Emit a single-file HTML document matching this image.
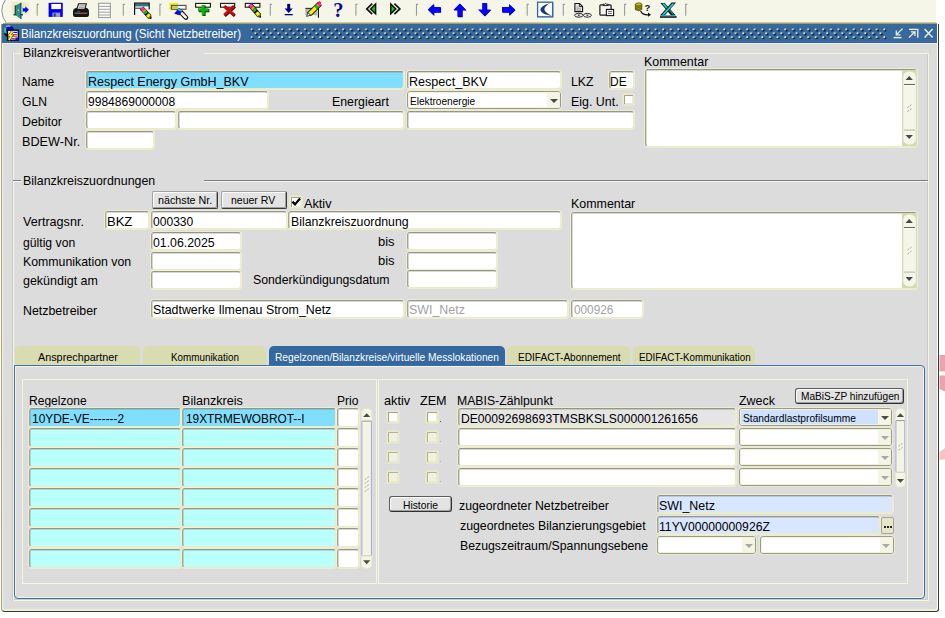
<!DOCTYPE html><html><head><meta charset="utf-8"><title>Bilanzkreiszuordnung</title><style>
*{box-sizing:border-box;margin:0;padding:0}
html,body{width:945px;height:618px;overflow:hidden;background:#fff}
body{font-family:"Liberation Sans",sans-serif;font-size:13.6px;color:#000;position:relative}
.a{position:absolute}
.t{position:absolute;white-space:pre;line-height:14px;height:14px;transform-origin:0 0}
.f{position:absolute;background:#fff;border:1px solid;border-color:#95977e #ebebc8 #ebebc8 #a4a688;border-radius:3px;box-shadow:0 0 0 1px rgba(241,241,212,0.8)}
.f>i{display:block;position:absolute;left:0;top:0;right:0;bottom:0;border-top:1px solid rgba(120,120,130,0.28);border-left:1px solid rgba(120,120,135,0.3);border-radius:2px 0 0 0}
.dd{position:absolute;background:#fff;border:1px solid #9c9c82;border-radius:3px;overflow:hidden;box-shadow:0 0 0 1px rgba(240,240,214,0.7)}
.dd>i{display:block;position:absolute;left:0;top:0;right:0;bottom:0;border:1px solid #f1f1dc;border-radius:2px}
.dd>b{display:block;position:absolute;right:0;top:0;bottom:0;width:13px;background:#f5f5e6}
.dd>s{display:block;position:absolute;right:2.4px;top:7.2px;width:0;height:0;border-left:4px solid transparent;border-right:4px solid transparent;border-top:4.4px solid #4a4a4a}
.dd.dis>s{border-top-color:#a8a8a8}
.cy{background:#80dfff}
.cy2{background:#b9fffb}
.lb{background:#d8e7ff}
.btn{position:absolute;background:#e3e3e3;border:1px solid;border-color:#a2a2a2 #383838 #383838 #a2a2a2;border-radius:2px;box-shadow:inset -1px -1px 0 #a0a0a0,inset 1px 1px 0 #fdfdfd}
.cb{position:absolute;width:11px;height:11px;background:#fff;border:1px solid #e9e9c6;border-radius:1.5px;box-shadow:inset 1px 1px 0 #a4a484,inset -1px -1px 0 #ecebd0,0 0 0 1px rgba(238,238,205,0.45)}
.cbd{position:absolute;width:11px;height:11px;background:#f1f1e2;border:1px solid #e9e9c6;border-radius:1.5px;box-shadow:inset 1px 1px 0 #b4b492,inset -1px -1px 0 #e8e8cc,0 0 0 1px rgba(238,238,205,0.45)}
.tab{position:absolute;top:346px;height:20px;background:#d9dbb1;border-radius:5px 5px 0 0}
.tabA{background:#34689f}
.sb{position:absolute;background:#f4f4e4;border:1px solid #e4e4c8;border-radius:4px}
.up{position:absolute;width:0;height:0;border-left:4px solid transparent;border-right:4px solid transparent;border-bottom:4px solid #4d4d4d}
.dn{position:absolute;width:0;height:0;border-left:4px solid transparent;border-right:4px solid transparent;border-top:4px solid #4d4d4d}
</style></head><body>
<div class="a" style="left:8px;top:0px;width:928px;height:22px;background:#f5f5e8;"></div>
<svg class="a" style="left:0;top:0" width="12" height="24" viewBox="0 0 12 24"><path d="M5.6 -0.5 Q-2.6 11 6.6 23.5 H12 V-0.5 Z" fill="#f5f5e8"/><path d="M5.6 -0.5 Q-2.6 11 6.6 23.5" fill="none" stroke="#8e8e8e" stroke-width="1"/></svg>
<div class="a" style="left:5px;top:22px;width:931px;height:1px;background:#cfcba0;"></div>
<div class="a" style="left:3px;top:23px;width:934px;height:1px;background:#a39f6a;"></div>
<svg class="a" style="left:0;top:0" width="945" height="22" viewBox="0 0 945 22">
<path d="M38.8 4.4 H37.2 V15.8" stroke="#9b9b9b" stroke-width="1.1" fill="none"/>
<path d="M124.9 4.4 H123.3 V15.8" stroke="#9b9b9b" stroke-width="1.1" fill="none"/>
<path d="M161.5 4.4 H159.9 V15.8" stroke="#9b9b9b" stroke-width="1.1" fill="none"/>
<path d="M271.9 4.4 H270.3 V15.8" stroke="#9b9b9b" stroke-width="1.1" fill="none"/>
<path d="M357.5 4.4 H355.9 V15.8" stroke="#9b9b9b" stroke-width="1.1" fill="none"/>
<path d="M418.1 4.4 H416.5 V15.8" stroke="#9b9b9b" stroke-width="1.1" fill="none"/>
<path d="M528.8 4.4 H527.2 V15.8" stroke="#9b9b9b" stroke-width="1.1" fill="none"/>
<path d="M564.9 4.4 H563.3 V15.8" stroke="#9b9b9b" stroke-width="1.1" fill="none"/>
<path d="M626.2 4.4 H624.6 V15.8" stroke="#9b9b9b" stroke-width="1.1" fill="none"/>
<path d="M687.3 4.4 H685.7 V15.8" stroke="#9b9b9b" stroke-width="1.1" fill="none"/>
<rect x="11.4" y="2.2" width="17.4" height="12.4" fill="#efecc6"/>
<path d="M13.5 14.8 H23" stroke="#222" stroke-width="1.2"/>
<polygon points="15.2,5.4 20.6,2.9 20.6,18.8 15.2,14.9" fill="#2b8f8f"/>
<path d="M15.2 5.4 V14.9 M20.9 2.8 V18.9" stroke="#10302f" stroke-width="1.1"/>
<rect x="17.8" y="9.4" width="1.4" height="1.8" fill="#c8d84a"/>
<rect x="21.5" y="6.4" width="1.6" height="7.4" fill="#8ae6e8"/>
<polygon points="22.8,8.2 25.4,8.2 25.4,6.3 28.8,9.8 25.4,13.2 25.4,11.4 22.8,11.4" fill="#0808f0"/>
<rect x="48.6" y="2.9" width="14.2" height="14" fill="#0000fa"/>
<rect x="51.3" y="3.9" width="9.8" height="5.2" fill="#fff"/>
<path d="M51.5 3.2 H62" stroke="#111" stroke-width="0.9" stroke-dasharray="1.2 0.8"/>
<rect x="52.4" y="12.6" width="7.8" height="4.3" fill="#a0a0a0"/>
<rect x="53.8" y="13.4" width="1.8" height="3.2" fill="#2020e0"/>
<rect x="49" y="5.4" width="1.2" height="1.2" fill="#000060"/>
<path d="M73 12 Q73 8.4 77 7.8 L86 7.8 Q89 8.4 89 12 V14.4 Q89 17 86 17 H76 Q73 17 73 14.4 Z" fill="#161616"/>
<polygon points="78.6,3.8 86.4,3.8 84.8,9.2 76.8,9.2" fill="#e4e4e4" stroke="#161616" stroke-width="1.1"/>
<path d="M79.4 5.8 H85 M78.8 7.4 H84.4" stroke="#9a9a9a" stroke-width="0.9"/>
<path d="M74.6 13.2 H87.4" stroke="#909090" stroke-width="0.9"/>
<rect x="81" y="12.4" width="2.4" height="1.8" fill="#e01818"/>
<rect x="77" y="11.4" width="3" height="0.9" fill="#2a7a7a"/>
<rect x="98.6" y="3.3" width="11.8" height="14.2" fill="#fbfbf6" stroke="#9f9f9f" stroke-width="1.1"/>
<path d="M99 6.4 H110" stroke="#a9a9a9" stroke-width="1.1"/>
<path d="M99 9.3 H110" stroke="#a9a9a9" stroke-width="1.1"/>
<path d="M99 12.2 H110" stroke="#a9a9a9" stroke-width="1.1"/>
<path d="M99 15 H110" stroke="#a9a9a9" stroke-width="1.1"/>
<rect x="134.6" y="3.2" width="14.6" height="11.6" fill="#fff"/>
<rect x="135" y="3.8" width="14" height="2.6" fill="#2a7878"/>
<path d="M134.6 15 V3.2 H149.2 V9.5" stroke="#101010" stroke-width="1.2" fill="none"/>
<path d="M134.6 8.2 H142" stroke="#1a4a4a" stroke-width="1.1"/>
<path d="M141.6 8.0 L149.7 16.9" stroke="#101010" stroke-width="4.8" /><path d="M141.60 8.00 L143.48 10.08" stroke="#ff28c8" stroke-width="3.6"/><path d="M143.48 10.08 L144.98 11.74" stroke="#ff8a10" stroke-width="3.6"/><path d="M144.98 11.74 L146.49 13.41" stroke="#10c810" stroke-width="3.6"/><path d="M146.49 13.41 L147.43 14.45" stroke="#101010" stroke-width="3.6"/><path d="M147.43 14.45 L149.68 16.94" stroke="#f4f010" stroke-width="3.6"/><polygon points="148.3,18.2 151.0,15.7 151.0,18.4" fill="#f4f010" stroke="#101010" stroke-width="0.7"/><circle cx="150.6" cy="18.0" r="0.9" fill="#101010"/>
<rect x="169.4" y="3" width="8.8" height="7.2" fill="#f6f010"/>
<rect x="171.4" y="5.4" width="14.6" height="3.8" fill="#fafaf4" stroke="#4a4a4a" stroke-width="1.1"/>
<rect x="171.9" y="5.9" width="6.2" height="2.8" fill="#c8c860"/>
<path d="M180 11.6 L186 17.6" stroke="#101010" stroke-width="4.6" stroke-linecap="round"/>
<path d="M180.2 11.8 L185.8 17.4" stroke="#fff" stroke-width="2.6" stroke-linecap="round"/>
<polygon points="174.6,13.4 178.8,8.4 182.4,10.6 179.4,15" fill="#0a0ae0" stroke="#101030" stroke-width="0.6"/>
<polygon points="177.4,9.8 178.9,8.4 182.2,10.5 181,11.8" fill="#10d8e8"/>
<path d="M182.6 10.8 L185.4 14.2" stroke="#e01010" stroke-width="1"/>
<rect x="195.6" y="3.4" width="14.8" height="3.8" fill="#fbfbf6" stroke="#161616" stroke-width="1.1"/>
<path d="M198.8 10.6 H209.4 M204 5.6 V16" stroke="#063806" stroke-width="3.2"/>
<path d="M198 9.8 H208.6 M203.2 5 V15.2" stroke="#0cb40c" stroke-width="3"/>
<rect x="220.5" y="3.4" width="14.2" height="3.8" fill="#fbfbf6" stroke="#161616" stroke-width="1.1"/>
<path d="M224.8 6.6 L234.8 15.8 M234.8 6.6 L224.8 15.8" stroke="#400808" stroke-width="3"/>
<path d="M224.2 6 L234 15 M234 6 L224.2 15" stroke="#c80c0c" stroke-width="2.8"/>
<rect x="245.3" y="3.4" width="14.6" height="3.8" fill="#fbfbf6" stroke="#161616" stroke-width="1.1"/>
<path d="M250.0 4.6 L259.1 15.4" stroke="#101010" stroke-width="4.8" /><path d="M250.00 4.60 L252.12 7.12" stroke="#ff28c8" stroke-width="3.6"/><path d="M252.12 7.12 L253.82 9.14" stroke="#ff8a10" stroke-width="3.6"/><path d="M253.82 9.14 L255.51 11.15" stroke="#10c810" stroke-width="3.6"/><path d="M255.51 11.15 L256.57 12.41" stroke="#101010" stroke-width="3.6"/><path d="M256.57 12.41 L259.12 15.44" stroke="#f4f010" stroke-width="3.6"/><polygon points="257.7,16.6 260.5,14.3 260.6,17.2" fill="#f4f010" stroke="#101010" stroke-width="0.7"/><circle cx="260.2" cy="16.7" r="0.9" fill="#101010"/>
<rect x="287.2" y="3.9" width="3" height="5.4" fill="#00008c"/>
<polygon points="284.6,8.6 292.8,8.6 288.7,12.9" fill="#00008c"/>
<rect x="284.7" y="14" width="8" height="1.3" fill="#00008c"/>
<rect x="305.4" y="8.2" width="11.6" height="7" fill="#b4b4b4"/>
<path d="M305.4 8.4 H313" stroke="#303030" stroke-width="1.1"/>
<path d="M318.4 8 V17.8" stroke="#101010" stroke-width="1.1"/>
<path d="M309 14.4 L320 3.6" stroke="#101010" stroke-width="5.2"/>
<path d="M309.4 14 L316 7.4" stroke="#f6f018" stroke-width="3.6"/>
<path d="M315.6 7.8 L317.4 6" stroke="#10c020" stroke-width="3.8"/>
<path d="M317.4 6 L318.6 4.8" stroke="#ff8a10" stroke-width="3.8"/>
<path d="M318.6 4.8 L320.4 3.2" stroke="#ff30c0" stroke-width="3.8"/>
<path d="M318 3.4 L319.6 1.9 L321 3.2" stroke="#e81818" stroke-width="1.2" fill="none"/>
<polygon points="306.6,16.4 308,12.6 310.6,15.2" fill="#fff" stroke="#101010" stroke-width="0.8"/>
<text x="333.2" y="17.4" font-family="Liberation Serif" font-weight="bold" font-size="20.5" fill="#0a0a96">?</text>
<path d="M372.2 3.7 L366.8 8.9 L372.2 14.1" stroke="#101010" stroke-width="1.7" fill="none"/>
<polygon points="375.6,4 370.6,8.9 375.6,13.8" fill="#10d010" stroke="#101010" stroke-width="1.5"/>
<polygon points="390.8,4 395.8,8.9 390.8,13.8" fill="#10d010" stroke="#101010" stroke-width="1.5"/>
<path d="M394.4 3.7 L399.8 8.9 L394.4 14.1" stroke="#101010" stroke-width="1.7" fill="none"/>
<polygon points="427.8,9.6 433.8,3.8 433.8,7 440.6,7 440.6,12.2 433.8,12.2 433.8,15.3" fill="#000070" transform="translate(0.5,0.6)"/>
<polygon points="427.8,9.6 433.8,3.8 433.8,7 440.6,7 440.6,12.2 433.8,12.2 433.8,15.3" fill="#0404f8"/>
<polygon points="453.4,10 459.8,3.4 466.1,10 462.2,10 462.2,16.6 457.4,16.6 457.4,10" fill="#000070" transform="translate(0.5,0.6)"/>
<polygon points="453.4,10 459.8,3.4 466.1,10 462.2,10 462.2,16.6 457.4,16.6 457.4,10" fill="#0404f8"/>
<polygon points="482.2,3 486.8,3 486.8,9.4 490.8,9.4 484.5,15.9 478.1,9.4 482.2,9.4" fill="#000070" transform="translate(0.5,0.6)"/>
<polygon points="482.2,3 486.8,3 486.8,9.4 490.8,9.4 484.5,15.9 478.1,9.4 482.2,9.4" fill="#0404f8"/>
<polygon points="502,7 509,7 509,3.9 515,9.6 509,15.3 509,12.2 502,12.2" fill="#000070" transform="translate(0.5,0.6)"/>
<polygon points="502,7 509,7 509,3.9 515,9.6 509,15.3 509,12.2 502,12.2" fill="#0404f8"/>
<rect x="538" y="2.6" width="15.8" height="15" fill="#b9b9b9"/>
<rect x="537.6" y="2.2" width="15" height="14.6" fill="#fff" stroke="#3564a6" stroke-width="1.3"/>
<path d="M550.6 3 C543.5 4.5 539.6 8.2 540.6 10.4 C541.8 13.2 546 15 552 15.8 C547 13.4 544.6 11.4 544.4 9.4 C544.2 7.4 546.6 5 550.6 3 Z" fill="#12397c"/>
<polygon points="574.9,3.5 579.6,3.5 582.6,6.4 582.6,11.6 574.9,11.6" fill="#e6e6e6" stroke="#161616" stroke-width="1.1"/>
<path d="M579.4 3.6 V6.6 H582.4" stroke="#161616" stroke-width="0.9" fill="none"/>
<path d="M576.4 7 H578.6 M576.4 8.8 H581 M576.4 10.2 H581" stroke="#8a8a8a" stroke-width="0.8"/>
<ellipse cx="578.8" cy="15.3" rx="4.2" ry="1.9" fill="#f2f2ea" stroke="#161616" stroke-width="0.9"/><circle cx="578.8" cy="15.3" r="1" fill="#555"/>
<ellipse cx="587.4" cy="15.3" rx="4" ry="1.9" fill="#f2f2ea" stroke="#161616" stroke-width="0.9"/><circle cx="587.4" cy="15.3" r="1" fill="#555"/>
<rect x="599.9" y="4.8" width="11.2" height="10.4" rx="1" fill="#f4f4ee" stroke="#161616" stroke-width="1.2"/>
<path d="M603 5.6 V4.2 H604.6 Q605.5 2.6 606.6 4.2 H608.2 V5.6 Z" fill="#e0e0e0" stroke="#161616" stroke-width="0.9"/>
<rect x="606.4" y="9.4" width="7.2" height="6.2" fill="#fff" stroke="#161616" stroke-width="1.1"/>
<path d="M608 11.4 H612 M608 13.4 H612" stroke="#555" stroke-width="0.9"/>
<path d="M635.4 4.4 V9.6 Q638.6 12 641.8 9.6 V4.4 Z" fill="#a8a204" stroke="#4a4600" stroke-width="0.8"/>
<ellipse cx="638.6" cy="4.4" rx="3.2" ry="1.5" fill="#c8c020" stroke="#4a4600" stroke-width="0.8"/>
<path d="M635.6 6.6 Q638.6 8.4 641.6 6.6 M635.6 8.4 Q638.6 10.2 641.6 8.4" stroke="#4a4600" stroke-width="0.7" fill="none"/>
<text x="644.6" y="11" font-family="Liberation Sans" font-weight="bold" font-size="9.5" fill="#101010">?</text>
<path d="M640.6 11 Q642.4 15.2 648.6 14.8" stroke="#101010" stroke-width="1.2" fill="none"/>
<polygon points="648,12.6 651,14.8 648,16.8" fill="#101010"/>
<path d="M660.4 3 H664.6 L675.8 15.4 H671.2 Z" fill="#101010"/>
<path d="M676 2.6 H671.6 L660 15.4 H664.6 Z" fill="#101010"/>
<path d="M674.6 3.4 H672.2 L661.8 14.8 H664.2 Z" fill="#18d0d8"/>
<path d="M662 3.6 H664.2 L667.4 7.2 L666.2 8.4 Z" fill="#18d0d8"/>
<path d="M669.2 10.4 L670.4 9.2 L674.2 14.8 H672.8 Z" fill="#0a8a90"/>
<rect x="660" y="16.2" width="16.6" height="1.6" fill="#101010"/>
<rect x="661" y="15.2" width="14" height="1" fill="#18b0b8"/>
</svg>
<div class="a" style="left:0px;top:26px;width:940px;height:587px;background:#fff;"></div>
<div class="a" style="left:1px;top:24px;width:938px;height:588px;background:#dcdcdc;border-radius:0 0 3px 4px;border-left:1px solid #a8a272;border-right:1px solid #3a3a30;border-bottom:1px solid #3a3a30;box-shadow:inset 1px 0 0 #f4f4de,inset -1px 0 0 #fff,inset 0 -2px 0 #f0f0da"></div>
<div class="a" style="left:2px;top:24px;width:935px;height:19px;background:#37699f;"></div>
<div class="a" style="left:2px;top:43px;width:935px;height:1px;background:#efe9ec;"></div>
<svg class="a" style="left:0;top:24px" width="945" height="20" viewBox="0 0 945 20">
<defs><pattern id="dp" x="250.5" y="4.2" width="7.622" height="7.8" patternUnits="userSpaceOnUse"><rect x="1.4" y="1.4" width="1.9" height="1.9" fill="#040a14"/><rect x="0.3" y="0.3" width="1.7" height="1.7" rx="0.4" fill="#f4f3cc"/><rect x="5.211" y="5.3" width="1.9" height="1.9" fill="#040a14"/><rect x="4.111" y="4.2" width="1.7" height="1.7" rx="0.4" fill="#f4f3cc"/></pattern></defs>
<rect x="250.5" y="4.2" width="635.83" height="10.9" fill="url(#dp)"/>
<g stroke="#f0efd8" stroke-width="1.3" fill="none" stroke-linecap="butt"><path d="M902.6 4.6 L896.6 10.4 M896.3 6.6 V10.8 H900.5"/><path d="M893.6 13.6 H901.6" stroke-width="1.4"/><path d="M909 5.4 H917.8 V13.8" /><path d="M909 13.6 L914.6 8 M910.8 7.8 H915 V12"/><path d="M924.6 5 L932.6 13.4 M932.6 5 L924.6 13.4" stroke-width="1.4"/></g>
</svg>
<svg class="a" style="left:3px;top:24px" width="18" height="18" viewBox="3 24 18 18"><circle cx="9.2" cy="30.6" r="5.1" fill="#0a0ab8"/><path d="M5.6 27.4 Q4.2 30.4 6 33.6" stroke="#46c084" stroke-width="1.9" fill="none"/><path d="M6.2 26.6 Q8.6 25.4 10.4 26.4" stroke="#c8b8ec" stroke-width="1.3" fill="none"/><path d="M4.6 33.2 Q5.6 36 8 36.4" stroke="#06063a" stroke-width="1.6" fill="none"/><rect x="7.5" y="30.2" width="10.8" height="10" fill="#fff" stroke="#050508" stroke-width="1.3"/><rect x="13.6" y="31.8" width="3.6" height="1.2" fill="#1010d0"/><rect x="13" y="34.1" width="4.2" height="1.1" fill="#f01818"/><rect x="12.8" y="35.7" width="4.2" height="1" fill="#f01818"/><rect x="12" y="38" width="2.8" height="1.1" fill="#f01818"/><rect x="15.3" y="37.5" width="2.6" height="2.6" fill="#1010d0"/><path d="M12.4 31.4 L9.6 35.5 L11.4 35.9 L8.8 39.9" stroke="#1a1a70" stroke-width="3" fill="none"/><path d="M12.4 31.4 L9.6 35.5 L11.4 35.9 L8.8 39.9" stroke="#f6f210" stroke-width="1.9" fill="none"/></svg>
<div class="t" style="left:21.30px;top:26.50px;color:#fff;transform:scaleX(0.8514);">Bilanzkreiszuordnung (Sicht Netzbetreiber)</div>
<div class="a" style="left:13px;top:53px;width:8px;height:1px;background:#f5f5de;"></div>
<div class="a" style="left:204px;top:53px;width:725px;height:1px;background:#f5f5de;"></div>
<div class="a" style="left:13px;top:53px;width:1px;height:548px;background:#f5f5de;"></div>
<div class="a" style="left:12px;top:53px;width:1px;height:548px;background:#cbcbcb;"></div>
<div class="a" style="left:928px;top:53px;width:1px;height:548px;background:#f5f5de;"></div>
<div class="a" style="left:927px;top:54px;width:1px;height:546px;background:#cbcbcb;"></div>
<div class="a" style="left:13px;top:600px;width:916px;height:1px;background:#f5f5de;"></div>
<div class="a" style="left:14px;top:599px;width:914px;height:1px;background:#cbcbcb;"></div>
<div class="t" style="left:23.40px;top:45.50px;transform:scaleX(0.9105);">Bilanzkreisverantwortlicher</div>
<div class="t" style="left:22.00px;top:74.50px;transform:scaleX(0.8879);">Name</div>
<div class="t" style="left:22.00px;top:94.50px;transform:scaleX(0.8908);">GLN</div>
<div class="t" style="left:22.00px;top:114.50px;transform:scaleX(0.9104);">Debitor</div>
<div class="t" style="left:22.00px;top:134.50px;transform:scaleX(0.9321);">BDEW-Nr.</div>
<div class="f cy" style="left:86px;top:71px;width:318px;height:18px;"><i></i></div>
<div class="t" style="left:88.40px;top:74.50px;transform:scaleX(0.9196);">Respect Energy GmbH_BKV</div>
<div class="f " style="left:407px;top:71px;width:154px;height:18px;"><i></i></div>
<div class="t" style="left:409.00px;top:74.50px;transform:scaleX(0.9251);">Respect_BKV</div>
<div class="t" style="left:571.40px;top:74.50px;transform:scaleX(0.9023);">LKZ</div>
<div class="f " style="left:609px;top:71px;width:25px;height:18px;"><i></i></div>
<div class="t" style="left:610.40px;top:74.50px;transform:scaleX(0.8787);">DE</div>
<div class="f " style="left:86px;top:91px;width:182px;height:18px;"><i></i></div>
<div class="t" style="left:88.40px;top:94.50px;transform:scaleX(0.8871);">9984869000008</div>
<div class="t" style="left:332.00px;top:94.50px;transform:scaleX(0.9072);">Energieart</div>
<div class="dd " style="left:407px;top:91px;width:154px;height:18px"><b></b><i></i><s></s></div>
<div class="t" style="left:410.40px;top:94.00px;font-size:10.8px;transform:scaleX(0.9364);">Elektroenergie</div>
<div class="t" style="left:570.70px;top:94.50px;transform:scaleX(0.9129);">Eig. Unt.</div>
<div class="cb" style="left:623px;top:94px"></div>
<div class="f " style="left:86px;top:111px;width:90px;height:18px;"><i></i></div>
<div class="f " style="left:178px;top:111px;width:226px;height:18px;"><i></i></div>
<div class="f " style="left:407px;top:111px;width:227px;height:18px;"><i></i></div>
<div class="f " style="left:86px;top:131px;width:68px;height:18px;"><i></i></div>
<div class="t" style="left:644.00px;top:54.50px;transform:scaleX(0.9151);">Kommentar</div>
<div class="f " style="left:645px;top:69px;width:272px;height:78px;"><i></i></div>
<svg class="a" style="left:902px;top:70px" width="14.6" height="76" viewBox="0 0 14.6 76">
<rect x="0" y="0" width="14.6" height="76" fill="#d3dab0"/>
<rect x="1.2" y="1.4" width="12.6" height="73" rx="5.5" fill="#f5f5e8"/>
<polygon points="7.2,6 10.9,10 3.5,10" fill="#484848"/>
<rect x="2" y="14" width="11" height="1" fill="#646464"/><rect x="2" y="15" width="11" height="1" fill="#fcfcf4"/>
<rect x="2" y="59.6" width="11" height="1" fill="#b4b6a0"/>
<polygon points="3.5,65 10.9,65 7.2,69" fill="#484848"/>
<path d="M5.4 37.6 L9.8 34.4" stroke="#a9ad84" stroke-width="1" stroke-dasharray="2 1"/><path d="M5.4 41.6 L9.8 38.4" stroke="#a9ad84" stroke-width="1" stroke-dasharray="2 1"/>
</svg>
<div class="a" style="left:13px;top:180px;width:8px;height:1px;background:#7c7c7c;"></div>
<div class="a" style="left:204px;top:180px;width:724px;height:1px;background:#7c7c7c;"></div>
<div class="a" style="left:13px;top:181px;width:8px;height:1px;background:#f6f6f6;"></div>
<div class="a" style="left:204px;top:181px;width:724px;height:1px;background:#f6f6f6;"></div>
<div class="t" style="left:23.40px;top:173.50px;transform:scaleX(0.9111);">Bilanzkreiszuordnungen</div>
<div class="btn" style="left:152px;top:191px;width:66px;height:17.5px;"></div>
<div class="t" style="left:158.00px;top:193.00px;font-size:10.8px;transform:scaleX(0.9941);">nächste Nr.</div>
<div class="btn" style="left:220.5px;top:191px;width:66px;height:17.5px;"></div>
<div class="t" style="left:231.40px;top:193.00px;font-size:10.8px;transform:scaleX(0.9731);">neuer RV</div>
<div class="cb" style="left:290px;top:196px;width:12px;height:11.5px"><svg width="10" height="10" style="position:absolute;left:0;top:0" viewBox="0 0 10 10"><path d="M1.4 4.6 L4 7.4 L9 1.6" stroke="#000" stroke-width="2.3" fill="none"/></svg></div>
<div class="t" style="left:303.70px;top:196.50px;transform:scaleX(0.9332);">Aktiv</div>
<div class="t" style="left:23.40px;top:214.50px;transform:scaleX(0.9262);">Vertragsnr.</div>
<div class="t" style="left:23.40px;top:235.50px;transform:scaleX(0.8969);">gültig von</div>
<div class="t" style="left:23.40px;top:254.50px;transform:scaleX(0.9063);">Kommunikation von</div>
<div class="t" style="left:23.40px;top:273.50px;transform:scaleX(0.9176);">gekündigt am</div>
<div class="t" style="left:23.40px;top:303.50px;transform:scaleX(0.9092);">Netzbetreiber</div>
<div class="f " style="left:105px;top:211px;width:44px;height:18px;"><i></i></div>
<div class="t" style="left:107.00px;top:214.50px;transform:scaleX(0.9570);">BKZ</div>
<div class="f " style="left:151px;top:211px;width:136px;height:18px;"><i></i></div>
<div class="t" style="left:153.00px;top:214.50px;transform:scaleX(0.8882);">000330</div>
<div class="f " style="left:288px;top:211px;width:273px;height:18px;"><i></i></div>
<div class="t" style="left:290.70px;top:214.50px;transform:scaleX(0.9047);">Bilanzkreiszuordnung</div>
<div class="f " style="left:151px;top:232px;width:90px;height:18px;"><i></i></div>
<div class="t" style="left:153.00px;top:235.50px;transform:scaleX(0.9053);">01.06.2025</div>
<div class="t" style="left:378.00px;top:234.50px;transform:scaleX(0.9545);">bis</div>
<div class="f " style="left:407px;top:232px;width:90px;height:18px;"><i></i></div>
<div class="f " style="left:151px;top:252px;width:90px;height:18px;"><i></i></div>
<div class="t" style="left:378.00px;top:253.50px;transform:scaleX(0.9545);">bis</div>
<div class="f " style="left:407px;top:252px;width:90px;height:18px;"><i></i></div>
<div class="f " style="left:151px;top:271px;width:90px;height:18px;"><i></i></div>
<div class="t" style="left:253.00px;top:272.50px;transform:scaleX(0.9037);">Sonderkündigungsdatum</div>
<div class="f " style="left:407px;top:270px;width:90px;height:18px;"><i></i></div>
<div class="f " style="left:151px;top:300px;width:253px;height:18px;"><i></i></div>
<div class="t" style="left:153.00px;top:302.50px;transform:scaleX(0.9111);">Stadtwerke Ilmenau Strom_Netz</div>
<div class="f " style="left:407px;top:300px;width:161px;height:18px;"><i></i></div>
<div class="t" style="left:409.00px;top:302.50px;color:#a2a2a2;transform:scaleX(0.9136);">SWI_Netz</div>
<div class="f " style="left:571px;top:300px;width:72px;height:18px;"><i></i></div>
<div class="t" style="left:574.00px;top:302.50px;color:#a2a2a2;transform:scaleX(0.8661);">000926</div>
<div class="t" style="left:570.70px;top:196.50px;transform:scaleX(0.9137);">Kommentar</div>
<div class="f " style="left:571px;top:212px;width:346px;height:77px;"><i></i></div>
<svg class="a" style="left:902px;top:213px" width="14.6" height="75" viewBox="0 0 14.6 75">
<rect x="0" y="0" width="14.6" height="75" fill="#d3dab0"/>
<rect x="1.2" y="1.4" width="12.6" height="72" rx="5.5" fill="#f5f5e8"/>
<polygon points="7.2,6 10.9,10 3.5,10" fill="#484848"/>
<rect x="2" y="14" width="11" height="1" fill="#646464"/><rect x="2" y="15" width="11" height="1" fill="#fcfcf4"/>
<rect x="2" y="58.6" width="11" height="1" fill="#b4b6a0"/>
<polygon points="3.5,64 10.9,64 7.2,68" fill="#484848"/>
<path d="M5.4 37.1 L9.8 33.9" stroke="#a9ad84" stroke-width="1" stroke-dasharray="2 1"/><path d="M5.4 41.1 L9.8 37.9" stroke="#a9ad84" stroke-width="1" stroke-dasharray="2 1"/>
</svg>
<div class="tab " style="left:15px;width:125px"></div>
<div class="t" style="left:38.00px;top:350.00px;font-size:10.8px;transform:scaleX(1.0009);">Ansprechpartner</div>
<div class="tab " style="left:143px;width:123px"></div>
<div class="t" style="left:171.40px;top:350.00px;font-size:10.8px;transform:scaleX(0.9124);">Kommunikation</div>
<div class="tab tabA" style="left:268.5px;width:236.5px"></div>
<div class="t" style="left:275.00px;top:350.00px;font-size:10.8px;color:#fff;transform:scaleX(0.9445);">Regelzonen/Bilanzkreise/virtuelle Messlokationen</div>
<div class="tab " style="left:507px;width:123px"></div>
<div class="t" style="left:518.00px;top:350.00px;font-size:10.8px;transform:scaleX(0.9342);">EDIFACT-Abonnement</div>
<div class="tab " style="left:632.5px;width:122.5px"></div>
<div class="t" style="left:639.00px;top:350.00px;font-size:10.8px;transform:scaleX(0.9072);">EDIFACT-Kommunikation</div>
<div class="a" style="left:14px;top:365px;width:911px;height:234px;border:1px solid #3d70a8;border-radius:0 4px 4px 4px;box-shadow:inset 1px 1px 0 #f4f4e2,inset -1px -1px 0 #f4f4e2"></div>
<div class="a" style="left:22px;top:379px;width:355px;height:205px;border:1px solid #f5f5de"></div>
<div class="a" style="left:378px;top:379px;width:530px;height:205px;border:1px solid #f5f5de"></div>
<div class="t" style="left:29.00px;top:393.50px;transform:scaleX(0.8862);">Regelzone</div>
<div class="t" style="left:181.70px;top:393.50px;transform:scaleX(0.9265);">Bilanzkreis</div>
<div class="t" style="left:337.40px;top:393.50px;transform:scaleX(0.8889);">Prio</div>
<div class="f cy" style="left:29px;top:408px;width:152px;height:19px;"><i></i></div>
<div class="f cy" style="left:182px;top:408px;width:154px;height:19px;"><i></i></div>
<div class="f " style="left:337px;top:408px;width:22px;height:19px;"><i></i></div>
<div class="f cy2" style="left:29px;top:428px;width:152px;height:19px;"><i></i></div>
<div class="f cy2" style="left:182px;top:428px;width:154px;height:19px;"><i></i></div>
<div class="f " style="left:337px;top:428px;width:22px;height:19px;"><i></i></div>
<div class="f cy2" style="left:29px;top:448px;width:152px;height:19px;"><i></i></div>
<div class="f cy2" style="left:182px;top:448px;width:154px;height:19px;"><i></i></div>
<div class="f " style="left:337px;top:448px;width:22px;height:19px;"><i></i></div>
<div class="f cy2" style="left:29px;top:468px;width:152px;height:19px;"><i></i></div>
<div class="f cy2" style="left:182px;top:468px;width:154px;height:19px;"><i></i></div>
<div class="f " style="left:337px;top:468px;width:22px;height:19px;"><i></i></div>
<div class="f cy2" style="left:29px;top:488px;width:152px;height:19px;"><i></i></div>
<div class="f cy2" style="left:182px;top:488px;width:154px;height:19px;"><i></i></div>
<div class="f " style="left:337px;top:488px;width:22px;height:19px;"><i></i></div>
<div class="f cy2" style="left:29px;top:508px;width:152px;height:19px;"><i></i></div>
<div class="f cy2" style="left:182px;top:508px;width:154px;height:19px;"><i></i></div>
<div class="f " style="left:337px;top:508px;width:22px;height:19px;"><i></i></div>
<div class="f cy2" style="left:29px;top:528px;width:152px;height:19px;"><i></i></div>
<div class="f cy2" style="left:182px;top:528px;width:154px;height:19px;"><i></i></div>
<div class="f " style="left:337px;top:528px;width:22px;height:19px;"><i></i></div>
<div class="f cy2" style="left:29px;top:549px;width:152px;height:19px;"><i></i></div>
<div class="f cy2" style="left:182px;top:549px;width:154px;height:19px;"><i></i></div>
<div class="f " style="left:337px;top:549px;width:22px;height:19px;"><i></i></div>
<div class="t" style="left:32.20px;top:411.50px;transform:scaleX(0.8782);">10YDE-VE-------2</div>
<div class="t" style="left:185.80px;top:411.50px;transform:scaleX(0.8716);">19XTRMEWOBROT--I</div>
<svg class="a" style="left:360.8px;top:408px" width="11.4" height="161" viewBox="0 0 11.4 161">
<rect x="0.4" y="0.4" width="10.6" height="160.2" rx="4.5" fill="#f5f5e6" stroke="#e6e6cc" stroke-width="0.9"/>
<polygon points="5.7,5.2 9.3,9 2.1,9" fill="#484848"/>
<polygon points="2.1,152.4 9.3,152.4 5.7,156.2" fill="#484848"/>
<rect x="0.6" y="13.4" width="10.200000000000001" height="134.0" fill="#f4f4e4"/>
<rect x="0.4" y="13.4" width="1" height="134.0" fill="#a6a6e0"/>
<rect x="9.9" y="13.4" width="1" height="134.0" fill="#a6a6e0"/>
<rect x="1" y="12.6" width="9.4" height="0.9" fill="#8c8c9c"/>
<rect x="1" y="147.4" width="9.4" height="0.9" fill="#c8c8b4"/>
<path d="M3.8 71.6 L8.2 68.4" stroke="#a9ad84" stroke-width="1" stroke-dasharray="2 1"/><path d="M3.8 75.6 L8.2 72.4" stroke="#a9ad84" stroke-width="1" stroke-dasharray="2 1"/><path d="M3.8 79.6 L8.2 76.4" stroke="#a9ad84" stroke-width="1" stroke-dasharray="2 1"/><path d="M3.8 83.6 L8.2 80.4" stroke="#a9ad84" stroke-width="1" stroke-dasharray="2 1"/>
</svg>
<div class="t" style="left:383.70px;top:393.50px;transform:scaleX(0.9373);">aktiv</div>
<div class="t" style="left:419.70px;top:393.50px;transform:scaleX(0.9267);">ZEM</div>
<div class="t" style="left:457.40px;top:393.50px;transform:scaleX(0.9002);">MABIS-Zählpunkt</div>
<div class="t" style="left:739.20px;top:393.50px;transform:scaleX(0.9139);">Zweck</div>
<div class="btn" style="left:795px;top:388px;width:108.5px;height:16px;border-color:#5a5a5a #303030 #303030 #5a5a5a;border-radius:3px;"></div>
<div class="t" style="left:800.70px;top:389.00px;font-size:10.8px;transform:scaleX(0.9387);">MaBiS-ZP hinzufügen</div>
<div class="cb" style="left:387px;top:411px;width:12px;height:11.5px"></div>
<div class="cb" style="left:425.5px;top:411px;width:12px;height:11.5px"></div>
<div class="a" style="left:439.5px;top:421px;width:1px;height:1px;background:#555;"></div>
<div class="f " style="left:458px;top:408px;width:278px;height:18px;background:#e5e5e5"><i></i></div>
<div class="dd " style="left:739px;top:408px;width:153px;height:18px"><u style="display:block;position:absolute;left:1px;top:1px;bottom:1px;right:13px;background:#cfe1ff"></u><b></b><i></i><s></s></div>
<div class="cbd" style="left:387px;top:431px;width:12px;height:11.5px"></div>
<div class="cbd" style="left:425.5px;top:431px;width:12px;height:11.5px"></div>
<div class="a" style="left:439.5px;top:441px;width:1px;height:1px;background:#aaa;"></div>
<div class="f " style="left:458px;top:428px;width:278px;height:18px;"><i></i></div>
<div class="dd dis" style="left:739px;top:428px;width:153px;height:18px"><b></b><i></i><s></s></div>
<div class="cbd" style="left:387px;top:451px;width:12px;height:11.5px"></div>
<div class="cbd" style="left:425.5px;top:451px;width:12px;height:11.5px"></div>
<div class="a" style="left:439.5px;top:461px;width:1px;height:1px;background:#aaa;"></div>
<div class="f " style="left:458px;top:448px;width:278px;height:18px;"><i></i></div>
<div class="dd dis" style="left:739px;top:448px;width:153px;height:18px"><b></b><i></i><s></s></div>
<div class="cbd" style="left:387px;top:471px;width:12px;height:11.5px"></div>
<div class="cbd" style="left:425.5px;top:471px;width:12px;height:11.5px"></div>
<div class="a" style="left:439.5px;top:481px;width:1px;height:1px;background:#aaa;"></div>
<div class="f " style="left:458px;top:468px;width:278px;height:18px;"><i></i></div>
<div class="dd dis" style="left:739px;top:468px;width:153px;height:18px"><b></b><i></i><s></s></div>
<div class="t" style="left:460.60px;top:411.50px;transform:scaleX(0.8930);">DE00092698693TMSBKSLS000001261656</div>
<div class="t" style="left:743.20px;top:411.00px;font-size:10.8px;transform:scaleX(0.9454);">Standardlastprofilsumme</div>
<svg class="a" style="left:894.6px;top:408.3px" width="10.8" height="79.5" viewBox="0 0 10.8 79.5">
<rect x="0.4" y="0.4" width="10.0" height="78.7" rx="4.5" fill="#f5f5e6" stroke="#e6e6cc" stroke-width="0.9"/>
<polygon points="5.4,5.2 9.0,9 1.8000000000000003,9" fill="#484848"/>
<polygon points="1.8000000000000003,70.9 9.0,70.9 5.4,74.7" fill="#484848"/>
<rect x="0.6" y="13" width="9.600000000000001" height="50.8" fill="#f4f4e4"/>
<rect x="0.4" y="13" width="1" height="50.8" fill="#a6a6e0"/>
<rect x="9.3" y="13" width="1" height="50.8" fill="#a6a6e0"/>
<rect x="1" y="12.2" width="8.8" height="0.9" fill="#8c8c9c"/>
<rect x="1" y="63.8" width="8.8" height="0.9" fill="#c8c8b4"/>
<path d="M3.5 38.2 L7.9 35.0" stroke="#a9ad84" stroke-width="1" stroke-dasharray="2 1"/><path d="M3.5 42.2 L7.9 39.0" stroke="#a9ad84" stroke-width="1" stroke-dasharray="2 1"/>
</svg>
<div class="btn" style="left:389px;top:496px;width:63px;height:16px;border-color:#5a5a5a #303030 #303030 #5a5a5a;border-radius:3px;"></div>
<div class="t" style="left:403.00px;top:498.00px;font-size:10.8px;transform:scaleX(0.9533);">Historie</div>
<div class="t" style="left:459.00px;top:498.50px;transform:scaleX(0.9057);">zugeordneter Netzbetreiber</div>
<div class="t" style="left:459.60px;top:518.50px;transform:scaleX(0.9062);">zugeordnetes Bilanzierungsgebiet</div>
<div class="t" style="left:459.60px;top:538.50px;transform:scaleX(0.9045);">Bezugszeitraum/Spannungsebene</div>
<div class="f lb" style="left:657px;top:495px;width:236px;height:18px;"><i></i></div>
<div class="t" style="left:658.90px;top:498.50px;transform:scaleX(0.9136);">SWI_Netz</div>
<div class="f lb" style="left:657px;top:516px;width:223px;height:18px;"><i></i></div>
<div class="t" style="left:659.30px;top:519.50px;transform:scaleX(0.8964);">11YV00000000926Z</div>
<div class="a" style="left:880.5px;top:516.5px;width:13px;height:17.5px;background:#e7e7c8;border:1px solid #a6a68c;border-radius:2px"><div class="a" style="left:2px;top:8px;width:2px;height:2px;background:#222;box-shadow:3px 0 0 #222,6px 0 0 #222"></div></div>
<div class="dd dis" style="left:657px;top:536px;width:99px;height:18px"><b></b><i></i><s></s></div>
<div class="dd dis" style="left:759.5px;top:536px;width:134px;height:18px"><b></b><i></i><s></s></div>
<svg class="a" style="left:939px;top:355px" width="6" height="110" viewBox="0 0 6 110"><rect x="0.5" y="0" width="6" height="16.4" fill="#eba4ad"/><polygon points="0.5,20.5 6,20.5 6,36.5 0.5,34" fill="#eba4ad"/><polygon points="0.5,97 6,93 6,104 0.5,105" fill="#f5c3c3"/></svg>
</body></html>
